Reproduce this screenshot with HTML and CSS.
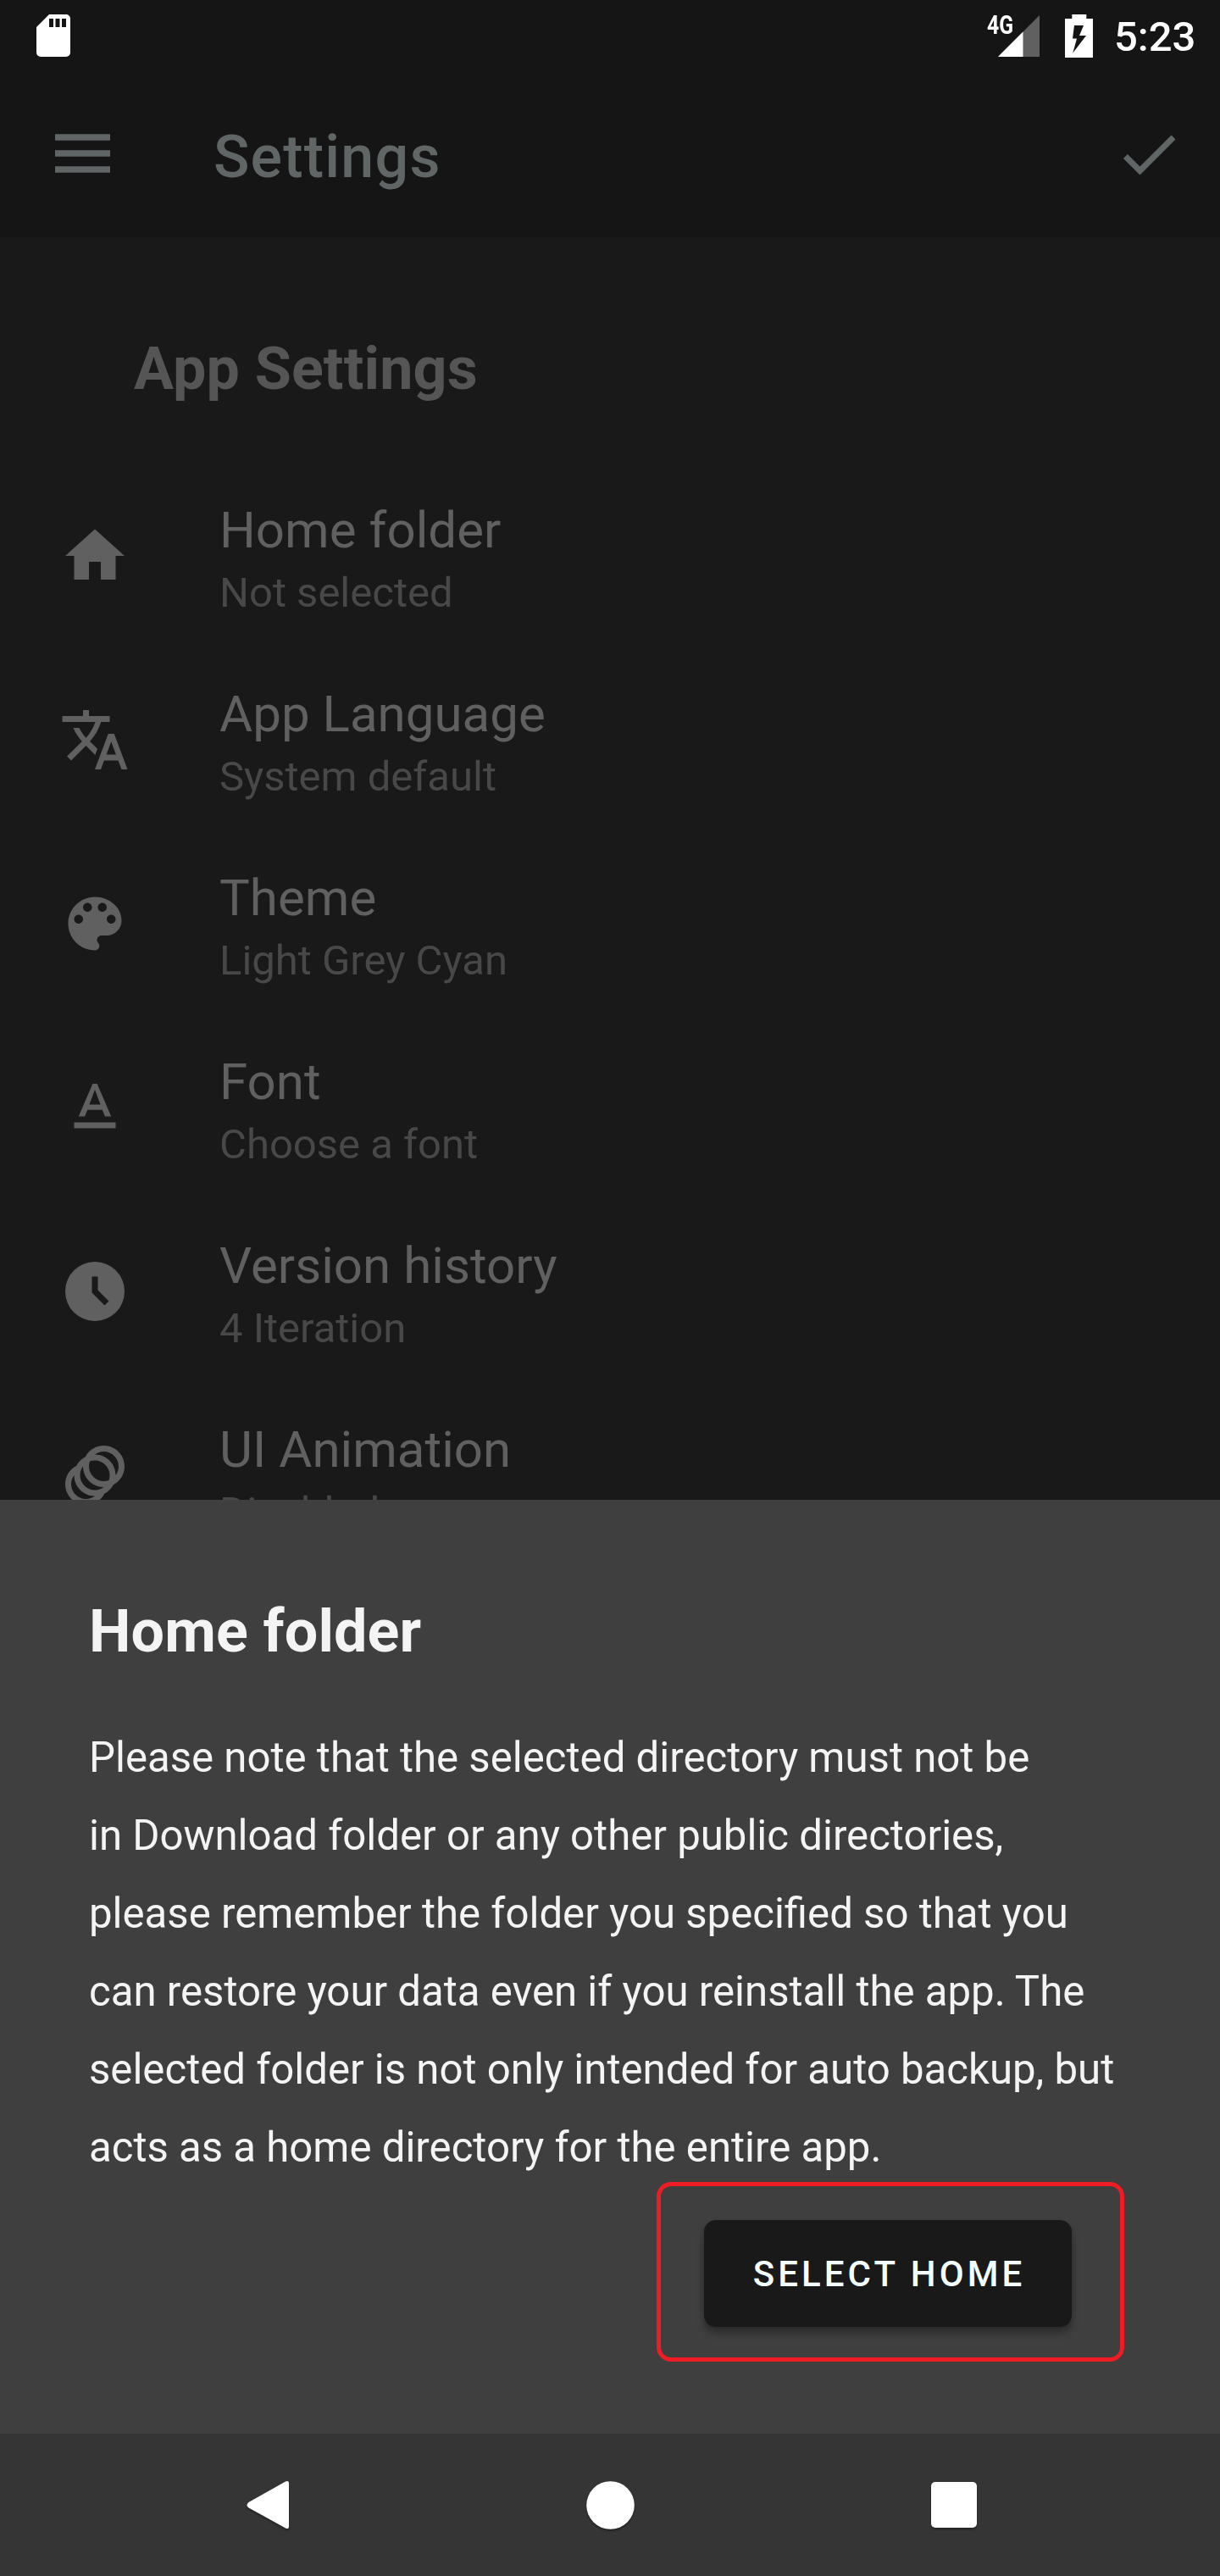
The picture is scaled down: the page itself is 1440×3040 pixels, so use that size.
FILE: index.html
```html
<!DOCTYPE html>
<html lang="en">
<head>
<meta charset="utf-8">
<title>Settings</title>
<link rel="stylesheet" href="styles.css">
</head>
<body>
<div class="screen">
  <div class="backdrop">
    <header class="top">
      <div class="status">
        <svg class="sd" viewBox="0 0 40 50"><path fill-rule="evenodd" d="M15 0H35a5 5 0 0 1 5 5V45a5 5 0 0 1-5 5H5a5 5 0 0 1-5-5V15zM15 5v10h5V5zM22.500 5v10h5V5zM30 5v10h5V5z"/></svg>
        <div class="status-right">
          <div class="signal">
            <svg viewBox="0 0 49 49"><path d="M49 0V49H0z" opacity=".32"/><path d="M29.500 19.500V49H0z"/></svg>
            <span class="net">4G</span>
          </div>
          <svg class="battery" viewBox="0 0 33 51"><path fill-rule="evenodd" d="M8.300 0h17v5H33v46H0V5h8.300zM11 13L9 28.500h5L9.300 45.500 25 25h-8l5-12z"/></svg>
          <span class="time">5:23</span>
        </div>
      </div>
      <div class="appbar">
        <svg class="menu" viewBox="0 0 65 46"><path d="M0 .2h65v7.600H0zM0 19.200h65v7.600H0zM0 38.200h65v7.600H0z"/></svg>
        <h1>Settings</h1>
        <svg class="check" viewBox="0 0 24 24"><path d="M9 16.170L4.830 12l-1.420 1.410L9 19 21 7l-1.410-1.410z"/></svg>
      </div>
    </header>
    <main class="list">
      <h2>App Settings</h2>
      <div class="row">
        <svg viewBox="0 0 24 24"><path d="M10 20v-6h4v6h5v-8h3L12 3 2 12h3v8z"/></svg>
        <div><p class="name">Home folder</p><p class="value">Not selected</p></div>
      </div>
      <div class="row">
        <svg viewBox="0 0 24 24"><path d="M12.870 15.070l-2.540-2.510.03-.03c1.740-1.940 2.980-4.170 3.710-6.530H17V4h-7V2H8v2H1v1.990h11.170C11.500 7.920 10.440 9.750 9 11.350 8.070 10.320 7.300 9.190 6.690 8h-2c.73 1.630 1.730 3.170 2.980 4.560l-5.090 5.020L4 19l5-5 3.110 3.110.76-2.040zM18.500 10h-2L12 22h2l1.120-3h4.750L21 22h2l-4.500-12zm-2.620 7l1.620-4.330L19.120 17h-3.240z"/></svg>
        <div><p class="name">App Language</p><p class="value">System default</p></div>
      </div>
      <div class="row">
        <svg viewBox="0 0 24 24"><path d="M12 3c-4.970 0-9 4.030-9 9s4.030 9 9 9c.83 0 1.500-.67 1.500-1.500 0-.39-.15-.74-.39-1.010-.23-.26-.38-.61-.38-.99 0-.83.67-1.500 1.500-1.500H16c2.760 0 5-2.240 5-5 0-4.420-4.030-8-9-8zm-5.500 9c-.83 0-1.500-.67-1.500-1.500S5.670 9 6.500 9 8 9.670 8 10.500 7.330 12 6.500 12zm3-4C8.670 8 8 7.330 8 6.500S8.670 5 9.500 5s1.500.67 1.500 1.500S10.330 8 9.500 8zm5 0c-.83 0-1.500-.67-1.500-1.500S13.670 5 14.500 5s1.500.67 1.500 1.500S15.330 8 14.500 8zm3 4c-.83 0-1.500-.67-1.500-1.500S16.670 9 17.500 9s1.500.67 1.500 1.500-.67 1.500-1.500 1.500z"/></svg>
        <div><p class="name">Theme</p><p class="value">Light Grey Cyan</p></div>
      </div>
      <div class="row">
        <svg viewBox="0 0 24 24"><path d="M5 17v2h14v-2H5zm4.500-4.200h5l.9 2.200h2.100L12.750 4h-1.500L6.500 15h2.100l.9-2.200zM12 5.980L13.870 11h-3.740L12 5.980z"/></svg>
        <div><p class="name">Font</p><p class="value">Choose a font</p></div>
      </div>
      <div class="row">
        <svg viewBox="0 0 24 24"><path fill-rule="evenodd" d="M12 2a10 10 0 1 0 0 20 10 10 0 0 0 0-20zm3.290 14.710L11 12.410V7h2v4.590l3.710 3.710-1.420 1.410z"/></svg>
        <div><p class="name">Version history</p><p class="value">4 Iteration</p></div>
      </div>
      <div class="row">
        <svg viewBox="0 0 24 24"><path d="M15 2c-2.710 0-5.050 1.540-6.220 3.780-1.280.67-2.340 1.720-3 3C3.540 9.950 2 12.290 2 15c0 3.870 3.130 7 7 7 2.710 0 5.050-1.540 6.220-3.780 1.280-.67 2.340-1.720 3-3C20.460 14.050 22 11.710 22 9c0-3.870-3.130-7-7-7zM9 20c-2.760 0-5-2.240-5-5 0-1.120.37-2.160 1-3 0 3.870 3.130 7 7 7-.84.63-1.880 1-3 1zm3-3c-2.760 0-5-2.240-5-5 0-1.120.37-2.160 1-3 0 3.860 3.130 6.990 7 7-.84.63-1.880 1-3 1zm4.700-3.300c-.53.19-1.100.3-1.700.3-2.760 0-5-2.240-5-5 0-.6.11-1.170.3-1.700.53-.19 1.100-.3 1.700-.3 2.760 0 5 2.240 5 5 0 .6-.11 1.170-.3 1.700zM19 12c0-3.860-3.130-6.990-7-7 .84-.63 1.870-1 3-1 2.760 0 5 2.240 5 5 0 1.120-.37 2.160-1 3z"/></svg>
        <div><p class="name">UI Animation</p><p class="value">Disabled</p></div>
      </div>
    </main>
  </div>
  <section class="sheet">
    <h2>Home folder</h2>
    <p>Please note that the selected directory must not be<br>in Download folder or any other public directories,<br>please remember the folder you specified so that you<br>can restore your data even if you reinstall the app. The<br>selected folder is not only intended for auto backup, but<br>acts as a home directory for the entire app.</p>
    <div class="highlight"><button>SELECT HOME</button></div>
  </section>
  <nav class="nav">
    <svg viewBox="0 0 50 58"><path d="M46 1.500Q50-.5 50 4V54Q50 58.500 46 56.500L2.500 32.500Q-1.500 29.500 2.500 26z"/></svg>
    <svg viewBox="0 0 57 57"><circle cx="28.500" cy="28.500" r="28.300"/></svg>
    <svg viewBox="0 0 54 54"><rect width="54" height="54" rx="5"/></svg>
  </nav>
</div>
</body>
</html>
```
FILE: styles.css
```css
* { box-sizing: border-box; margin: 0; padding: 0; }
body { background: #191919; font-family: Roboto, "Liberation Sans", sans-serif; }
svg { display: block; flex: none; fill: currentColor; }
.screen { width: 1440px; height: 3040px; display: flex; flex-direction: column; overflow: hidden; }

.backdrop { height: 1770px; flex: none; overflow: hidden; background: #191919; }
.top { height: 280px; background: #151515; }
.status { height: 84px; padding: 0 30px 0 43px; display: flex; justify-content: space-between; align-items: center; color: #fff; }
.sd { width: 40px; height: 50px; }
.status-right { display: flex; align-items: center; }
.signal { position: relative; width: 49px; height: 49px; margin-right: 30px; }
.signal svg { width: 49px; height: 49px; }
.net { position: absolute; left: -13px; top: -6px; font-size: 31px; line-height: 36px; font-weight: 700; transform: scaleX(.8); transform-origin: 0 0; }
.battery { width: 33px; height: 51px; margin-right: 25px; }
.time { width: 95px; font-size: 49px; line-height: 58px; font-weight: 500; white-space: nowrap; padding-top: 4px; }
.appbar { height: 196px; padding: 0 42px 0 65px; display: flex; align-items: center; color: #606665; }
.menu { width: 65px; height: 46px; margin-top: -3px; }
.appbar h1 { flex: 1; margin-left: 122px; margin-top: 6px; font-size: 70px; line-height: 82px; font-weight: 500; letter-spacing: 1.2px; }
.check { width: 84px; height: 84px; }

.list { padding-top: 114px; }
.list h2 { margin-left: 158px; height: 174px; font-size: 70px; line-height: 82px; font-weight: 700; letter-spacing: .15px; color: #555; }
.row { height: 217px; padding: 23px 0 0 70px; display: flex; gap: 105px; color: #606060; }
.row svg { width: 84px; height: 84px; margin-top: 23px; }
.name { font-size: 60px; line-height: 70px; letter-spacing: .04px; }
.value { margin-top: 4px; font-size: 49px; line-height: 70px; color: #484848; }

.sheet { height: 1102px; flex: none; padding: 113px 105px 0; background: #3f3f3f; color: #f4f4f4; display: flex; flex-direction: column; }
.sheet h2 { font-size: 70px; line-height: 84px; font-weight: 700; letter-spacing: .15px; }
.sheet p { margin-top: 61px; font-size: 49.15px; line-height: 92px; white-space: nowrap; }
.highlight { align-self: flex-end; width: 552px; height: 212px; margin: -5px 8px 0 0; padding: 40px 0 0 51px; border: 5px solid #ee1c25; border-radius: 17px; }
.highlight button { display: block; width: 434px; height: 126px; padding: 2px 0 0 3px; border: 0; border-radius: 14px; background: #191919; color: #f4ffff; font: 500 42px/124px Roboto, sans-serif; letter-spacing: 4.1px; box-shadow: 0 8px 9px rgba(0,0,0,.25), 0 2px 5px rgba(0,0,0,.15); }

.nav { height: 168px; flex: none; padding: 0 287px 0 291px; background: #353535; color: #fff; display: flex; justify-content: space-between; align-items: center; }
.nav svg { width: 57px; height: 57px; filter: drop-shadow(0 2px 1px rgba(0,0,0,.35)); }
.nav svg:first-child { width: 50px; height: 58px; }
.nav svg:last-child { width: 54px; height: 54px; }
```
